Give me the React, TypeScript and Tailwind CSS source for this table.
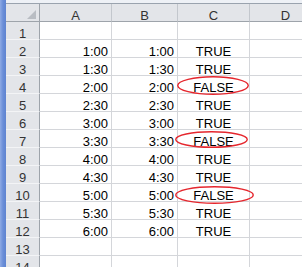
const rows: [string, string, string][] = [
  ['', '', ''],
  ['1:00', '1:00', 'TRUE'],
  ['1:30', '1:30', 'TRUE'],
  ['2:00', '2:00', 'FALSE'],
  ['2:30', '2:30', 'TRUE'],
  ['3:00', '3:00', 'TRUE'],
  ['3:30', '3:30', 'FALSE'],
  ['4:00', '4:00', 'TRUE'],
  ['4:30', '4:30', 'TRUE'],
  ['5:00', '5:00', 'FALSE'],
  ['5:30', '5:30', 'TRUE'],
  ['6:00', '6:00', 'TRUE'],
  ['', '', ''],
  ['', '', ''],
];

// red marker rings drawn over the FALSE cells (left, top, width, height)
const marks: Record<number, [number, number, number, number]> = {
  4: [-1, 0, 72, 19],
  7: [-3, 1, 73, 17],
  10: [-3, 2, 79, 18],
};

const cell = 'h-[18px] box-border border-b border-r border-[#d4d6da] pt-[6px] leading-[11px] shrink-0';

function Ring({ box }: { box: [number, number, number, number] }) {
  const [l, t, w, h] = box;
  return (
    <svg
      className="absolute overflow-visible pointer-events-none"
      style={{ left: l, top: t, width: w, height: h }}
      viewBox={`0 0 ${w} ${h}`}
    >
      <ellipse cx={w / 2} cy={h / 2} rx={w / 2 - 0.75} ry={h / 2 - 0.75} fill="none" stroke="#e5262d" strokeWidth={1.4} />
    </svg>
  );
}

export default function App() {
  return (
    <div className="flex w-[302px] h-[267px] overflow-hidden bg-white text-[13px] text-black" style={{ fontFamily: '"Liberation Sans", Arial, sans-serif' }}>
      {/* window edge */}
      <div className="w-[6px] shrink-0 bg-gradient-to-r from-[#8eaae4] via-[#6a8ed8] to-[#5f84d0]" />

      <div className="flex-1 flex flex-col">
        {/* strip above the headers */}
        <div className="h-[4px] shrink-0 box-border bg-[#eef1f6] border-b border-[#9aa3ae]" />

        {/* column headers */}
        <div className="flex bg-[#e3e5e9] text-[#333]">
          <div className="relative w-[34px] h-[18px] box-border border-r border-b border-[#9ea4ab] shrink-0">
            <div className="absolute right-[3px] bottom-[2px] w-0 h-0 border-l-[9px] border-l-transparent border-b-[9px] border-b-[#b9bdc3]" />
          </div>
          {['A', 'B', 'C', 'D'].map((c, i) => (
            <div
              key={c}
              className={`h-[18px] box-border border-r border-b border-r-[#c3c7cd] border-b-[#9ea4ab] pt-[6px] leading-[11px] text-center shrink-0 ${
                i === 0 ? 'w-[72px]' : i === 1 ? 'w-[66px]' : 'w-[72px]'
              }`}
            >
              {c}
            </div>
          ))}
          <div className="flex-1 h-[18px] box-border border-b border-[#9ea4ab]" />
        </div>

        {/* sheet body */}
        {rows.map(([a, b, c], i) => {
          const n = i + 1;
          const ring = marks[n];
          return (
            <div key={n} className="flex">
              <div className="w-[34px] h-[18px] box-border border-r border-b border-r-[#9ea4ab] border-b-[#f3f4f6] bg-[#e3e5e9] text-[#333] text-center pt-[6px] leading-[11px] shrink-0">
                {n}
              </div>
              <div className={`${cell} w-[72px] text-right pr-[3px]`}>{a}</div>
              <div className={`${cell} w-[66px] text-right pr-[3px]`}>{b}</div>
              <div className={`${cell} relative w-[72px] text-center`}>
                {c}
                {ring && <Ring box={ring} />}
              </div>
              <div className={`${cell} w-[72px]`} />
              <div className="flex-1 h-[18px] box-border border-b border-[#d4d6da]" />
            </div>
          );
        })}
      </div>
    </div>
  );
}
